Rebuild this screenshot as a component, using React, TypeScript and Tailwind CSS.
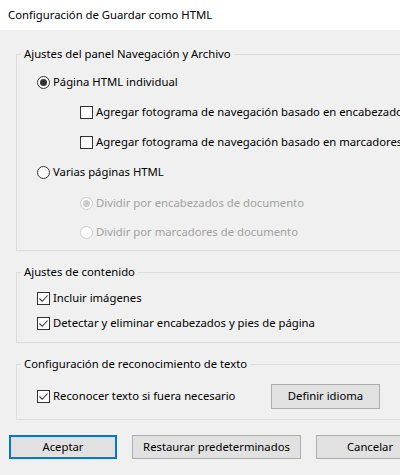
import React from "react";

function Radio({ checked, disabled }: { checked?: boolean; disabled?: boolean }) {
  return (
    <span
      className={`flex h-[13px] w-[13px] shrink-0 items-center justify-center rounded-full border bg-white ${
        disabled ? "border-[#cccccc] bg-[#f0f0f0]" : "border-[#333333]"
      }`}
    >
      {checked && (
        <span
          className={`h-[7px] w-[7px] rounded-full ${disabled ? "bg-[#cccccc]" : "bg-[#333333]"}`}
        />
      )}
    </span>
  );
}

function Check({ checked }: { checked?: boolean }) {
  return (
    <span className="flex h-[13px] w-[13px] shrink-0 items-center justify-center border border-[#333333] bg-white">
      {checked && (
        <svg width="11" height="11" viewBox="0 0 11 11">
          <path d="M1.5 5.5 L4.2 8.3 L9.6 2.5" fill="none" stroke="#333333" strokeWidth="1.1" />
        </svg>
      )}
    </span>
  );
}

function Row({
  children,
  indent,
  h = "h-[30px]",
}: {
  children: React.ReactNode;
  indent: string;
  h?: string;
}) {
  return <div className={`flex items-center gap-[3px] ${indent} ${h}`}>{children}</div>;
}

function Group({
  title,
  className,
  children,
}: {
  title: string;
  className: string;
  children: React.ReactNode;
}) {
  return (
    <fieldset className={`ml-[16px] w-[440px] border border-[#dcdcdc] ${className}`}>
      <legend className="ml-[4px] px-[3px] leading-[16px]">{title}</legend>
      {children}
    </fieldset>
  );
}

function Btn({ label, className }: { label: string; className: string }) {
  return (
    <button className={`flex shrink-0 items-center justify-center bg-[#e1e1e1] ${className}`}>
      {label}
    </button>
  );
}

export default function App() {
  return (
    <div className="h-[475px] w-[400px] overflow-hidden bg-[#f0f0f0] font-['Noto_Sans',sans-serif] text-[11.3px] text-black">
      <div className="flex h-[30px] items-center bg-white pl-[8px]">
        Configuración de Guardar como HTML
      </div>

      <div className="pt-[16px]">
        <Group title="Ajustes del panel Navegación y Archivo" className="pt-[5px] pb-[4px]">
          <Row indent="pl-[20px]">
            <Radio checked />
            <span>Página HTML individual</span>
          </Row>
          <Row indent="pl-[63px]">
            <Check />
            <span className="whitespace-nowrap">Agregar fotograma de navegación basado en encabezados</span>
          </Row>
          <Row indent="pl-[63px]">
            <Check />
            <span className="whitespace-nowrap">Agregar fotograma de navegación basado en marcadores</span>
          </Row>
          <Row indent="pl-[20px]" h="h-[31px]">
            <Radio />
            <span>Varias páginas HTML</span>
          </Row>
          <Row indent="pl-[63px]">
            <Radio checked disabled />
            <span className="text-[#a0a0a0]">Dividir por encabezados de documento</span>
          </Row>
          <Row indent="pl-[63px]" h="h-[28px]">
            <Radio disabled />
            <span className="text-[#a0a0a0]">Dividir por marcadores de documento</span>
          </Row>
        </Group>

        <Group title="Ajustes de contenido" className="mt-[13px] pt-[6px] pb-[6px]">
          <Row indent="pl-[20px]" h="h-[25px]">
            <Check checked />
            <span>Incluir imágenes</span>
          </Row>
          <Row indent="pl-[20px]" h="h-[25px]">
            <Check checked />
            <span>Detectar y eliminar encabezados y pies de página</span>
          </Row>
        </Group>

        <Group title="Configuración de reconocimiento de texto" className="mt-[13px] pt-[12px] pb-[10px]">
          <div className="flex h-[25px] items-center pl-[20px]">
            <div className="flex w-[234px] items-center gap-[3px]">
              <Check checked />
              <span>Reconocer texto si fuera necesario</span>
            </div>
            <Btn label="Definir idioma" className="h-[25px] w-[109px] border border-[#adadad]" />
          </div>
        </Group>

        <div className="mt-[15px] flex items-center gap-[15px] pl-[9px]">
          <Btn label="Aceptar" className="h-[24px] w-[108px] border-2 border-[#0078d7]" />
          <Btn label="Restaurar predeterminados" className="h-[24px] w-[169px] border border-[#adadad]" />
          <Btn label="Cancelar" className="h-[24px] w-[108px] border border-[#adadad]" />
        </div>
      </div>
    </div>
  );
}
